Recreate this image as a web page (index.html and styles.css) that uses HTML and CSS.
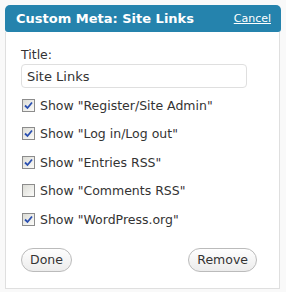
FILE: index.html
```html
<!DOCTYPE html>
<html lang="en">
<head>
    <meta charset="UTF-8">
    <title>Custom Meta: Site Links</title>
    <link rel="stylesheet" href="styles.css">
</head>
<body>
    <div class="widget">
        <div class="widget-top">
            <h3 class="widget-title">Custom Meta: Site Links</h3>
            <a href="#" class="widget-cancel">Cancel</a>
        </div>
        <div class="widget-inside">
            <label class="field-label" for="title">Title:</label>
            <input type="text" id="title" class="title-input" value="Site Links">

            <ul class="option-list">
                <li class="option"><span class="check on"><svg viewBox="0 0 9 9" width="9" height="9"><path d="M1 4.5 L3.5 7 L8 1.5" fill="none" stroke="#2a4fb0" stroke-width="1.8"/></svg></span>Show "Register/Site Admin"</li>
                <li class="option"><span class="check on"><svg viewBox="0 0 9 9" width="9" height="9"><path d="M1 4.5 L3.5 7 L8 1.5" fill="none" stroke="#2a4fb0" stroke-width="1.8"/></svg></span>Show "Log in/Log out"</li>
                <li class="option"><span class="check on"><svg viewBox="0 0 9 9" width="9" height="9"><path d="M1 4.5 L3.5 7 L8 1.5" fill="none" stroke="#2a4fb0" stroke-width="1.8"/></svg></span>Show "Entries RSS"</li>
                <li class="option"><span class="check"></span>Show "Comments RSS"</li>
                <li class="option"><span class="check on"><svg viewBox="0 0 9 9" width="9" height="9"><path d="M1 4.5 L3.5 7 L8 1.5" fill="none" stroke="#2a4fb0" stroke-width="1.8"/></svg></span>Show "WordPress.org"</li>
            </ul>

            <div class="widget-actions">
                <button class="btn">Done</button>
                <button class="btn">Remove</button>
            </div>
        </div>
    </div>
</body>
</html>
```

FILE: styles.css
```css
body {
    font-family: "DejaVu Sans", Verdana, sans-serif;
    font-size: 12.5px;
    color: #333;
    background-color: #f9f9f9;
    margin: 0;
    padding: 5px;
}

.widget {
    width: 276px;
}

.widget-top {
    display: flex;
    justify-content: space-between;
    align-items: center;
    height: 27px;
    padding: 0 10px 0 11px;
    background-color: #2583ad;
    border-radius: 5px 5px 3px 3px;
}

.widget-title {
    margin: 0;
    font-size: 13px;
    font-weight: bold;
    color: #fff;
}

.widget-cancel {
    font-size: 11px;
    color: #fff;
}

.widget-inside {
    margin-right: 1px;
    padding: 15px 15px 16px;
    background-color: #fff;
    border: 1px solid #dfdfdf;
    border-top: none;
}

.field-label {
    display: block;
    margin-bottom: 2px;
}

.title-input {
    box-sizing: border-box;
    width: 226px;
    height: 24px;
    margin: 0;
    padding: 0 5px;
    font-family: inherit;
    font-size: 13px;
    color: #333;
    border: 1px solid #dfdfdf;
    border-radius: 4px;
}

.option-list {
    list-style: none;
    margin: 3px 0 0;
    padding: 0;
}

.option {
    display: flex;
    align-items: center;
    height: 28.5px;
}

.check {
    display: flex;
    align-items: center;
    justify-content: center;
    box-sizing: border-box;
    width: 13px;
    height: 13px;
    margin: 0 5px 0 1px;
    border: 1px solid #8c8c8c;
    background: linear-gradient(135deg, #dcdcd6, #fbfbf9);
}

.widget-actions {
    display: flex;
    justify-content: space-between;
    margin-top: 14px;
    padding-right: 7px;
}

.btn {
    height: 24px;
    padding: 0 8px;
    font-family: inherit;
    font-size: 12.5px;
    color: #333;
    background: linear-gradient(#fefefe, #ececec);
    border: 1px solid #bbb;
    border-radius: 12px;
}
```
